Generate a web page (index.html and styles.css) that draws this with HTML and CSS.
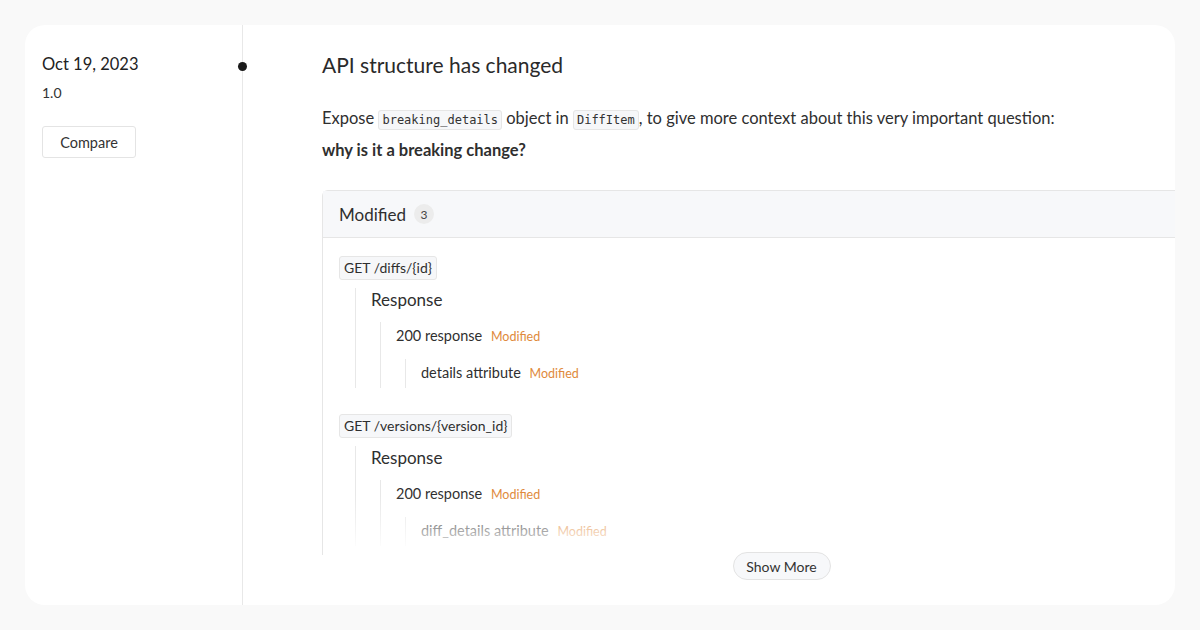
FILE: index.html
```html
<!DOCTYPE html>
<html>
<head>
<meta charset="utf-8">
<link rel="stylesheet" href="styles.css">
</head>
<body>
<div class="card">
  <aside class="side">
    <div class="date">Oct 19, 2023</div>
    <div class="version">1.0</div>
    <button class="compare">Compare</button>
    <span class="dot"></span>
  </aside>
  <main class="main">
    <h1 class="title">API structure has changed</h1>
    <p class="desc">Expose <code>breaking_details</code> object in <code>DiffItem</code>, to give more context about this very important question:</p>
    <p class="desc strong">why is it a breaking change?</p>
    <section class="box">
      <header class="box-head"><span class="box-title">Modified</span><span class="count">3</span></header>
      <div class="box-body">
        <div class="group">
          <span class="endpoint">GET /diffs/{id}</span>
          <div class="tree l1">
            <div class="row r1">Response</div>
            <div class="tree l2">
              <div class="row">200 response <span class="tag">Modified</span></div>
              <div class="tree l3">
                <div class="row">details attribute <span class="tag">Modified</span></div>
              </div>
            </div>
          </div>
        </div>
        <div class="group">
          <span class="endpoint">GET /versions/{version_id}</span>
          <div class="tree l1">
            <div class="row r1">Response</div>
            <div class="tree l2">
              <div class="row">200 response <span class="tag">Modified</span></div>
              <div class="tree l3">
                <div class="row">diff_details attribute <span class="tag">Modified</span></div>
              </div>
            </div>
          </div>
        </div>
        <div class="fade"></div>
      </div>
      <div class="more-row"><button class="more">Show More</button></div>
    </section>
  </main>
</div>
</body>
</html>
```

FILE: styles.css
```css
* { box-sizing: border-box; }
html, body { margin: 0; }
body {
  background: #f9f9f9;
  padding: 25px;
  font-family: Lato, "Open Sans", sans-serif;
  color: #2f2f2f;
}
.card {
  background: #fff;
  border-radius: 20px;
  height: 580px;
  width: 1150px;
  overflow: hidden;
  display: flex;
}
.side {
  position: relative;
  width: 218px;
  flex-shrink: 0;
  border-right: 1px solid #e8e8e8;
  padding: 28px 17px;
}
.date { font-size: 16.5px; line-height: 22px; color: #222; }
.version { font-size: 14px; margin-top: 9px; line-height: 18px; color: #333; }
.compare {
  margin-top: 24px;
  font-family: inherit;
  font-size: 14.5px;
  color: #333;
  background: #fff;
  border: 1px solid #e4e4e4;
  border-radius: 3px;
  height: 32px;
  width: 94px;
  padding: 0;
}
.dot {
  position: absolute;
  right: -5px;
  top: 37px;
  width: 9px;
  height: 9px;
  border-radius: 50%;
  background: #1a1a1a;
}
.main {
  flex-shrink: 0;
  width: 999px;
  padding: 0 0 0 79px;
}
.title {
  margin: 27px 0 0;
  font-size: 21px;
  font-weight: 400;
  line-height: 26px;
  color: #2a2a2a;
}
.desc {
  margin: 0;
  font-size: 16.5px;
  line-height: 32px;
  color: #2f2f2f;
}
.title + .desc { margin-top: 24px; }
.strong { font-weight: 700; }
code {
  font-family: "DejaVu Sans Mono", monospace;
  font-size: 12px;
  line-height: 1;
  background: #f6f7f9;
  border: 1px solid #e6e6e6;
  border-radius: 3px;
  padding: 2px 3px;
  color: #333;
}
.box {
  margin-top: 24px;
  width: 920px;
  border: 1px solid #e6e6e6;
  border-bottom: none;
  border-radius: 6px 6px 0 0;
}
.box-head {
  height: 47px;
  background: #f7f8fa;
  border-bottom: 1px solid #e6e6e6;
  display: flex;
  align-items: center;
  padding-left: 16px;
  gap: 8px;
}
.box-title { font-size: 17px; color: #2f2f2f; }
.count {
  width: 20px;
  height: 20px;
  border-radius: 50%;
  background: #ececec;
  font-size: 12px;
  display: flex;
  align-items: center;
  justify-content: center;
  color: #444;
}
.box-body {
  position: relative;
  height: 317px;
  overflow: hidden;
  padding: 18px 16px 0;
}
.group + .group { margin-top: 26px; }
.endpoint {
  display: inline-block;
  font-size: 14px;
  line-height: 22px;
  height: 24px;
  padding: 0 4px;
  background: #f6f7f9;
  border: 1px solid #e6e6e6;
  border-radius: 3px;
  color: #2f2f2f;
}
.tree {
  border-left: 1px solid #e8e8e8;
  padding-left: 15px;
}
.l1 { margin-left: 16px; margin-top: 8px; }
.l2, .l3 { margin-left: 9px; margin-top: 10px; }
.l3 { margin-top: 8px; }
.row { font-size: 14.5px; line-height: 28px; color: #2f2f2f; }
.r1 { font-size: 17px; line-height: 24px; }
.tag { font-size: 12.5px; color: #e08a3c; margin-left: 5px; }
.fade {
  position: absolute;
  left: -2px;
  right: 0;
  bottom: 0;
  height: 60px;
  background: linear-gradient(rgba(255,255,255,0), rgba(255,255,255,0.4) 45%, #fff 95%);
}
.more-row {
  display: flex;
  justify-content: center;
  margin-left: -1px;
  background: #fff;
  position: relative;
}
.more {
  margin-top: -3px;
  font-family: inherit;
  font-size: 14px;
  color: #333;
  background: #f7f8fa;
  border: 1px solid #e3e3e3;
  border-radius: 14px;
  height: 28px;
  width: 98px;
  padding: 0;
}
```
